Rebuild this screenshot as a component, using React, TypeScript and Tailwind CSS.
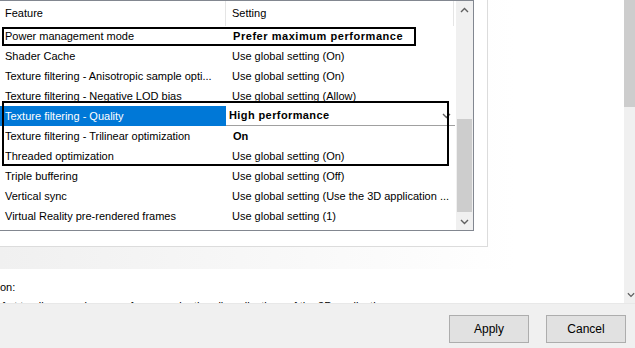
import React from "react";

const rows: { f: string; s: string; bold?: boolean; sel?: boolean; tight?: boolean }[] = [
  { f: "Power management mode", s: "Prefer maximum performance", bold: true, tight: true },
  { f: "Shader Cache", s: "Use global setting (On)" },
  { f: "Texture filtering - Anisotropic sample opti...", s: "Use global setting (On)" },
  { f: "Texture filtering - Negative LOD bias", s: "Use global setting (Allow)" },
  { f: "Texture filtering - Quality", s: "High performance", bold: true, sel: true },
  { f: "Texture filtering - Trilinear optimization", s: "On", bold: true },
  { f: "Threaded optimization", s: "Use global setting (On)" },
  { f: "Triple buffering", s: "Use global setting (Off)" },
  { f: "Vertical sync", s: "Use global setting (Use the 3D application ..." },
  { f: "Virtual Reality pre-rendered frames", s: "Use global setting (1)" },
];

function Chevron({ up, className }: { up?: boolean; className?: string }) {
  return (
    <svg width="9" height="6" viewBox="0 0 9 6" className={className}>
      <path
        d={up ? "M1 5 L4.5 1.5 L8 5" : "M1 1 L4.5 4.5 L8 1"}
        fill="none"
        stroke="#606060"
        strokeWidth="1.4"
      />
    </svg>
  );
}

export default function App() {
  return (
    <div
      className="relative w-[635px] h-[348px] overflow-hidden bg-[#f0f0f0] text-[11px] text-black"
      style={{ fontFamily: '"Liberation Sans", Arial, sans-serif' }}
    >
      <div className="flex h-[303px]">
        <div className="flex flex-col w-[624px]">
          {/* upper area with gradient */}
          <div className="h-[269px] bg-[linear-gradient(to_right,#f0f0f0_0px,#ffffff_515px)]">
            <div className="w-[488px] h-[247px] bg-white border-r border-b border-[#dcdcdc]">
              <div className="w-[474px] h-[231px] border-t border-r border-b border-[#828790] flex">
                <div className="w-[456px] flex flex-col">
                  <div className="flex h-[25px] items-center">
                    <div className="w-[226px] h-full pl-[5px] flex items-center border-r border-[#e5e5e5]">
                      Feature
                    </div>
                    <div className="w-[228px] h-full pl-[6px] flex items-center border-r border-[#e5e5e5]">
                      Setting
                    </div>
                  </div>
                  {rows.map((r, i) => (
                    <div key={i} className="flex h-[20px] items-center">
                      <div
                        className={
                          r.sel
                            ? "w-[226px] h-full pl-[5px] flex items-center bg-[#0078d7] text-white whitespace-nowrap"
                            : "w-[226px] h-full pl-[5px] flex items-center whitespace-nowrap"
                        }
                      >
                        {r.f}
                      </div>
                      {r.sel ? (
                        <div className="w-[229px] h-[19px] flex items-center justify-between pl-[3px] pr-[4px] border-b border-[#a0a0a0] bg-white">
                          <span className="font-bold tracking-[0.4px]">{r.s}</span>
                          <Chevron />
                        </div>
                      ) : (
                        <div
                          className={
                            r.tight
                              ? "flex-1 h-full pl-[7px] flex items-center font-bold whitespace-nowrap tracking-[0.55px]"
                              : r.bold
                              ? "flex-1 h-full pl-[7px] flex items-center font-bold whitespace-nowrap"
                              : "flex-1 h-full pl-[6px] flex items-center whitespace-nowrap"
                          }
                        >
                          {r.s}
                        </div>
                      )}
                    </div>
                  ))}
                </div>
                {/* list scrollbar */}
                <div className="w-[17px] h-full bg-[#f0f0f0] flex flex-col items-center">
                  <div className="h-[18px] flex items-center justify-center">
                    <Chevron up />
                  </div>
                  <div className="flex-1 w-full flex flex-col">
                    <div className="h-[100px]" />
                    <div className="h-[93px] w-[15px] mx-auto bg-[#cdcdcd]" />
                  </div>
                  <div className="h-[17px] flex items-center justify-center">
                    <Chevron />
                  </div>
                </div>
              </div>
            </div>
          </div>
          {/* description area */}
          <div className="h-[34px] bg-white overflow-hidden">
            <div className="h-[25px] flex items-end leading-[14px]">on:</div>
            <div className="mt-[5px] leading-[14px] whitespace-nowrap pl-[2px]">
              fo t to all ow maximum performance by the all applications of the 3D application
            </div>
          </div>
        </div>
        {/* page scrollbar */}
        <div className="w-[11px] h-full bg-[#f0f0f0] flex flex-col">
          <div className="h-[107px] bg-[#cdcdcd]" />
          <div className="flex-1" />
          <div className="h-[17px] flex items-center pl-[3px]">
            <Chevron />
          </div>
        </div>
      </div>
      {/* bottom buttons */}
      <div className="h-[45px] flex justify-end items-start pt-[11px] pr-[9px] gap-[17px] border-t border-[#e8e8e8]">
        <button className="w-[80px] h-[28px] bg-[#e1e1e1] border border-[#adadad] text-[12px]">Apply</button>
        <button className="w-[80px] h-[28px] bg-[#e1e1e1] border border-[#adadad] text-[12px]">Cancel</button>
      </div>

      {/* annotation frames */}
      <div className="absolute left-[2px] top-[27px] w-[414px] h-[19px] border-2 border-black pointer-events-none" />
      <div className="absolute left-[2px] top-[101px] w-[447px] h-[65px] border-2 border-black pointer-events-none" />
    </div>
  );
}
